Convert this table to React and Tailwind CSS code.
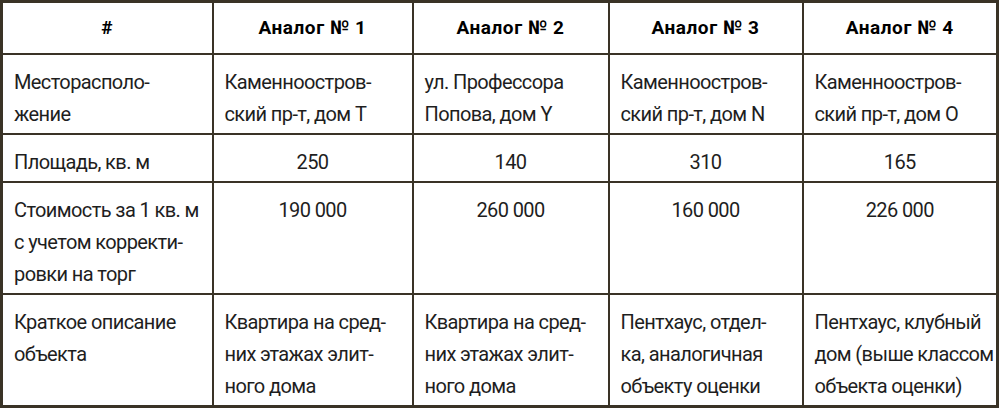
export default function App() {
  const rows = [
    {
      label: ['Месторасполо-', 'жение'],
      cells: [
        ['Каменноостров-', 'ский пр-т, дом T'],
        ['ул. Профессора', 'Попова, дом Y'],
        ['Каменноостров-', 'ский пр-т, дом N'],
        ['Каменноостров-', 'ский пр-т, дом O'],
      ],
      center: false,
    },
    {
      label: ['Площадь, кв. м'],
      cells: [['250'], ['140'], ['310'], ['165']],
      center: true,
    },
    {
      label: ['Стоимость за 1 кв. м', 'с учетом корректи-', 'ровки на торг'],
      cells: [['190 000'], ['260 000'], ['160 000'], ['226 000']],
      center: true,
    },
    {
      label: ['Краткое описание', 'объекта'],
      cells: [
        ['Квартира на сред-', 'них этажах элит-', 'ного дома'],
        ['Квартира на сред-', 'них этажах элит-', 'ного дома'],
        ['Пентхаус, отдел-', 'ка, аналогичная', 'объекту оценки'],
        ['Пентхаус, клубный', 'дом (выше классом', 'объекта оценки)'],
      ],
      center: false,
    },
  ];

  const lines = (arr) =>
    arr.map((t, i) => (
      <span key={i} className="block whitespace-nowrap">
        {t}
      </span>
    ));

  return (
    <div className="w-[1000px] h-[411px] bg-white" style={{ fontFamily: 'Roboto, "Liberation Sans", sans-serif' }}>
      <table className="w-[999px] table-fixed border-collapse border-[3px] border-[#3a3326] text-[#1e1e1e] text-[20px] leading-[32px] tracking-[-0.03em]">
        <colgroup>
          <col className="w-[211px]" />
          <col className="w-[200px]" />
          <col className="w-[196px]" />
          <col className="w-[194px]" />
          <col />
        </colgroup>
        <thead>
          <tr className="h-[52px]">
            {['#', 'Аналог № 1', 'Аналог № 2', 'Аналог № 3', 'Аналог № 4'].map((h) => (
              <th key={h} className="border-2 border-[#3a3326] p-0 text-center font-bold text-[19px] tracking-[0.03em] text-black align-middle">
                {h}
              </th>
            ))}
          </tr>
        </thead>
        <tbody>
          {rows.map((r, i) => (
            <tr key={i}>
              <td className="border-2 border-[#3a3326] align-top pt-[11px] pb-[3px] px-[11px]">{lines(r.label)}</td>
              {r.cells.map((c, j) => (
                <td
                  key={j}
                  className={
                    'border-2 border-[#3a3326] align-top pt-[11px] pb-[3px] px-[11px] ' +
                    (r.center ? 'text-center' : 'text-left')
                  }
                >
                  {lines(c)}
                </td>
              ))}
            </tr>
          ))}
        </tbody>
      </table>
    </div>
  );
}
